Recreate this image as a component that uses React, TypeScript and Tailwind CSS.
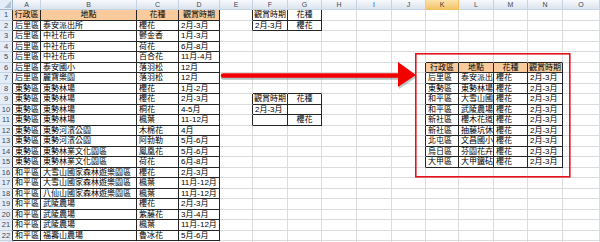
import React from "react";

const COLS = ["A", "B", "C", "D", "E", "F", "G", "H", "I", "J", "K", "L", "M", "N", "O"];
const ROWS = Array.from({ length: 23 }, (_, i) => i + 1);

type Cell = { t: string; center?: boolean; head?: boolean };

const data: Record<string, Cell> = {};
const set = (ref: string, t: string, center = false, head = false) => {
  data[ref] = { t, center, head };
};

const main: string[][] = [
  ["后里區", "泰安派出所", "櫻花", "2月-3月"],
  ["后里區", "中社花市", "鬱金香", "1月-3月"],
  ["后里區", "中社花市", "荷花", "6月-8月"],
  ["后里區", "中社花市", "百合花", "11月-4月"],
  ["后里區", "泰安國小", "落羽松", "12月"],
  ["后里區", "麗寶樂園", "落羽松", "12月"],
  ["東勢區", "東勢林場", "櫻花", "1月-2月"],
  ["東勢區", "東勢林場", "櫻花", "2月-3月"],
  ["東勢區", "東勢林場", "桐花", "4-5月"],
  ["東勢區", "東勢林場", "楓葉", "11-12月"],
  ["東勢區", "東勢河濱公園", "木棉花", "4月"],
  ["東勢區", "東勢河濱公園", "阿勃勒", "5月-6月"],
  ["東勢區", "東勢林業文化園區", "鳳凰花", "5月-6月"],
  ["東勢區", "東勢林業文化園區", "荷花", "6月-8月"],
  ["和平區", "大雪山國家森林遊樂園區", "櫻花", "2月-3月"],
  ["和平區", "大雪山國家森林遊樂園區", "楓葉", "11月-12月"],
  ["和平區", "八仙山國家森林遊樂園區", "楓葉", "11月-12月"],
  ["和平區", "武陵農場", "櫻花", "2月-3月"],
  ["和平區", "武陵農場", "紫藤花", "3月-4月"],
  ["和平區", "武陵農場", "楓葉", "11月-12月"],
  ["和平區", "福壽山農場", "魯冰花", "5月-6月"],
];

["行政區", "地點", "花種", "觀賞時期"].forEach((t, i) => set(`${COLS[i]}1`, t, true, true));
main.forEach((row, r) => row.forEach((t, c) => set(`${COLS[c]}${r + 2}`, t)));

set("F1", "觀賞時期", true);
set("G1", "花種", true);
set("F2", "2月-3月");
set("G2", "櫻花", true);
set("F9", "觀賞時期", true);
set("G9", "花種", true);
set("F10", "2月-3月");
set("G11", "櫻花", true);

const result: string[][] = [
  ["后里區", "泰安派出所", "櫻花", "2月-3月"],
  ["東勢區", "東勢林場", "櫻花", "2月-3月"],
  ["和平區", "大雪山國家森林遊樂園區", "櫻花", "2月-3月"],
  ["和平區", "武陵農場", "櫻花", "2月-3月"],
  ["新社區", "櫻木花道", "櫻花", "2月-3月"],
  ["新社區", "抽藤坑休閒農場", "櫻花", "2月-3月"],
  ["北屯區", "文昌國小", "櫻花", "2月-3月"],
  ["烏日區", "芬園花卉農場", "櫻花", "2月-3月"],
  ["大甲區", "大甲鐵砧山", "櫻花", "2月-3月"],
];
["行政區", "地點", "花種", "觀賞時期"].forEach((t, i) => set(`${COLS[i + 10]}6`, t, true, true));
result.forEach((row, r) => row.forEach((t, c) => set(`${COLS[c + 10]}${r + 7}`, t)));

const boxes: [number, number, number, number][] = [
  [0, 1, 3, 22],
  [5, 1, 6, 2],
  [5, 9, 6, 11],
  [10, 6, 13, 15],
];
const inBox = (c: number, r: number) =>
  boxes.some(([c1, r1, c2, r2]) => c >= c1 && c <= c2 && r >= r1 && r <= r2);

export default function App() {
  const cells: React.ReactNode[] = [];

  cells.push(
    <div
      key="corner"
      className="flex items-end justify-end border-r border-b border-[#9EB6CE] bg-[#E4ECF7] p-[1px]"
    >
      <svg width="7" height="7" viewBox="0 0 7 7">
        <polygon points="7,0 7,7 0,7" fill="#B4C2D4" />
      </svg>
    </div>
  );
  COLS.forEach((c, i) => {
    const sel = i === 10;
    cells.push(
      <div
        key={`h${c}`}
        className={
          sel
            ? "flex items-center justify-center border-r border-b border-[#F2C15D] bg-linear-to-b from-[#FBE3AE] to-[#F3C466] text-[7px] leading-none text-[#3A3A3A]"
            : "flex items-center justify-center border-r border-b border-[#C5D3E2] bg-linear-to-b from-[#F7F9FC] to-[#DCE4EF] text-[7px] leading-none text-[#3B4A5E]"
        }
      >
        {c}
      </div>
    );
  });

  ROWS.forEach((r) => {
    cells.push(
      <div
        key={`r${r}`}
        className={
          r <= 22
            ? "flex items-center justify-center border-r border-b border-r-[#333] border-b-[#C5D3E2] bg-[#E4ECF7] text-[7.5px] leading-none text-[#3B4A5E]"
            : "flex items-center justify-center border-r border-b border-r-[#9EB6CE] border-b-[#C5D3E2] bg-[#E4ECF7] text-[7.5px] leading-none text-[#3B4A5E]"
        }
      >
        {r}
      </div>
    );
    COLS.forEach((c, ci) => {
      const cell = data[`${c}${r}`];
      const rb = inBox(ci, r) || inBox(ci + 1, r);
      const bb = inBox(ci, r) || inBox(ci, r + 1);
      const cls = [
        "overflow-hidden whitespace-nowrap border-r border-b text-[8px] leading-[10px] text-black",
        rb ? "border-r-[#262626]" : "border-r-[#DADCDD]",
        bb ? "border-b-[#262626]" : "border-b-[#DADCDD]",
        cell?.head ? "bg-[#F9CB9C]" : "bg-white",
        cell?.center ? "text-center" : "pl-[2px]",
      ].join(" ");
      cells.push(
        <div key={`${c}${r}`} className={cls}>
          {cell?.t ?? ""}
        </div>
      );
    });
  });

  return (
    <div className="relative h-[242px] w-[600px] overflow-hidden bg-white font-['Liberation_Sans','Noto_Sans_CJK_TC',sans-serif]">
      <div className="grid grid-cols-[13px_28px_96px_42px_41px_33px_35px_34px_35px_35px_34px_33px_35px_34px_35px_37px] grid-rows-[10px_repeat(23,10.5px)]">
        {cells}
      </div>
      <svg
        className="pointer-events-none absolute left-0 top-0"
        width="600"
        height="242"
        viewBox="0 0 600 242"
      >
        <line x1="223" y1="77.5" x2="400" y2="77.5" stroke="#6F8F8C" strokeOpacity="0.55" strokeWidth="4.5" strokeLinecap="round" />
        <polygon points="399,64 417,77 399,89" fill="#6F8F8C" fillOpacity="0.45" />
        <line x1="223" y1="75.5" x2="401" y2="75.5" stroke="#F20000" strokeWidth="4.5" strokeLinecap="round" />
        <polygon points="398,62 416,75 398,87" fill="#F20000" />
        <rect x="415.8" y="53.8" width="154" height="123" fill="none" stroke="#E5121A" strokeWidth="1.6" />
      </svg>
    </div>
  );
}
